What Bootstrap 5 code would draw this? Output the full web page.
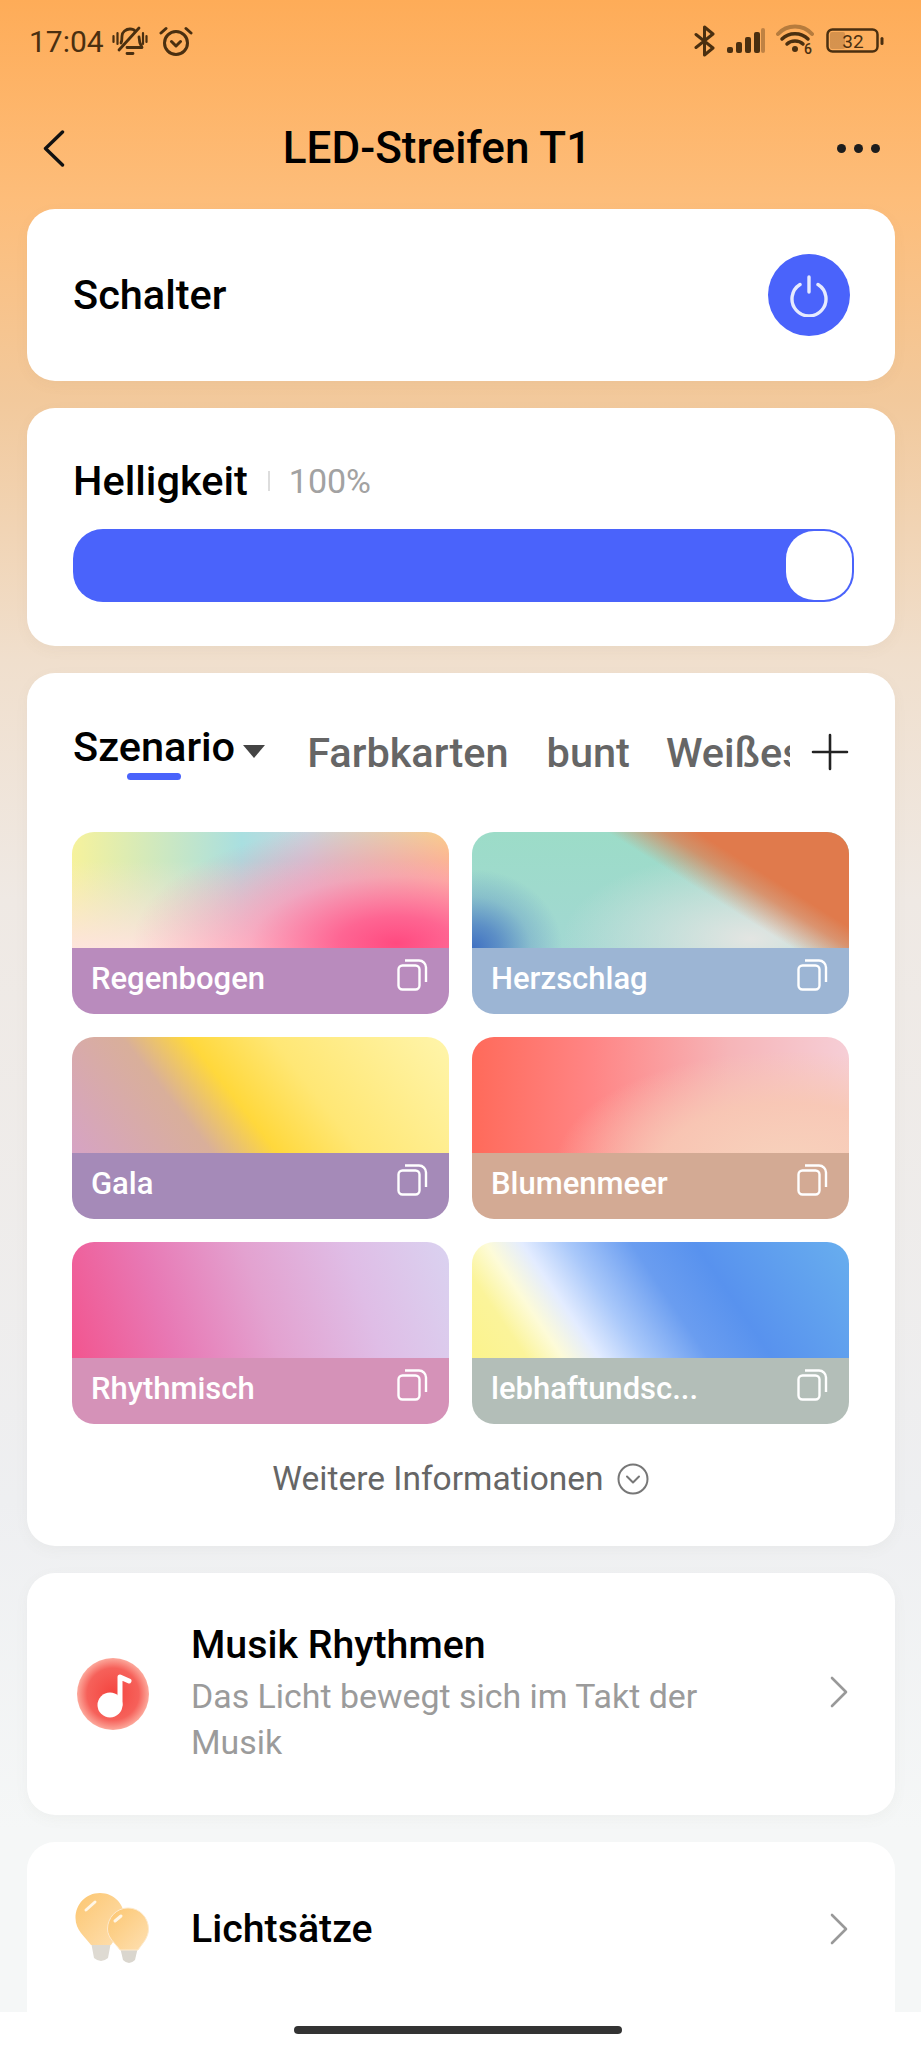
<!DOCTYPE html>
<html lang="de">
<head>
    <meta charset="UTF-8">
    <meta name="viewport" content="width=device-width, initial-scale=1.0">
    <title>LED-Streifen T1</title>
    <link href="https://cdn.jsdelivr.net/npm/bootstrap@5.3.2/dist/css/bootstrap.min.css" rel="stylesheet">
    <style>
        html, body { margin: 0; height: 2048px; overflow: hidden; }
        body { font-family: Roboto, "Liberation Sans", sans-serif; color: #000; background: #f5f7f7; }
        .app-screen {
            height: 2048px;
            background: linear-gradient(180deg, #feac58 0, #fdbd7a 200px, #f2c99c 400px, #f0dfcd 660px, #efe9e4 900px, #eeeff1 1500px, #f5f7f7 1830px);
        }
        .status-row { height: 82px; padding: 0 37px 0 29px; color: #4a2f10; font-size: 30px; }
        .status-row svg { display: block; }
        .status-gap { gap: 10px; }
        .alarm-gap { margin-left: 11px; }
        .nav-row { height: 127px; padding: 5px 41px 0 43px; }
        .nav-title { font-size: 44px; font-weight: 500; line-height: 1; position: absolute; left: 0; right: 47px; text-align: center; }
        .dots i { display: block; width: 9px; height: 9px; border-radius: 50%; background: #1d1d1d; }
        .panel { margin: 0 26px 27px 27px; border: 0; border-radius: 28px; box-shadow: 0 4px 14px rgba(120, 110, 100, .05); }
        .panel-switch { height: 172px; padding: 0 45px 0 46px; }
        .panel-switch span, .label-main { font-size: 41.500px; font-weight: 500; line-height: 48px; }
        .power-btn { width: 82px; height: 82px; border-radius: 50%; background: #4a63fb; }
        .panel-bright { height: 238px; padding: 49px 41px 0 46px; }
        .bright-sep { width: 2px; height: 20px; background: #ddd; margin: 0 19px 0 20px; }
        .bright-val { font-size: 34px; line-height: 48px; color: #a2a2a2; }
        .bright-track { height: 73px; margin-top: 24px; border-radius: 30px; background: #4a63fb; padding: 2px; }
        .bright-thumb { width: 66px; height: 69px; border-radius: 28px; background: #fff; }
        .panel-scene { height: 873px; padding: 50px 46px 0 45px; }
        .tab-strip { height: 109px; margin-left: 1px; }
        .tab-scroll { width: 717px; height: 60px; overflow: hidden; white-space: nowrap; }
        .tab-item { font-size: 41.500px; font-weight: 500; line-height: 48px; color: #666; margin-top: 6px; margin-right: 38px; }
        .tab-active { color: #000; margin-top: 0; margin-right: 42px; position: relative; }
        .tab-item-short { margin-right: 36px; }
        .tab-caret { display: inline-block; width: 0; height: 0; margin-left: 8px; border: 11px solid transparent; border-top: 13px solid #444; border-bottom: 0; vertical-align: 3px; }
        .tab-line { position: absolute; left: 54px; top: 50px; width: 54px; height: 7px; border-radius: 4px; background: #4a63fb; }
        .plus-mark { margin-top: 10px; }
        .tile-grid { display: grid; grid-template-columns: 377px 377px; gap: 23px; }
        .tile { height: 182px; border-radius: 22px; overflow: hidden; }
        .tile-art { height: 116px; }
        .tile-bar { height: 66px; padding: 0 20px 4px 19px; color: #fff; font-size: 31px; font-weight: 500; }
        .tile-bar svg { margin-bottom: 7px; }
        .art-rainbow { background:
            radial-gradient(ellipse 70% 105% at 86% 96%, #ff4a80 0, rgba(255, 88, 140, .9) 22%, rgba(255, 125, 170, .55) 55%, rgba(255, 140, 175, 0) 100%),
            linear-gradient(180deg, rgba(253, 226, 218, 0) 25%, #fde4dc 100%),
            linear-gradient(90deg, #f6f29c 0, #a9dfe0 45%, #c8d4dc 62%, #fad488 100%); }
        .art-heart { background:
            linear-gradient(32deg, rgba(224, 122, 76, 0) 57%, rgba(224, 122, 76, .75) 67%, #e07a4c 73%),
            radial-gradient(ellipse 24% 68% at 0 100%, #3f70c2 0, rgba(63, 112, 194, .7) 30%, rgba(63, 112, 194, .25) 65%, rgba(63, 112, 194, 0) 100%),
            radial-gradient(ellipse 50% 75% at 74% 92%, #e3e5e2 0, rgba(226, 229, 226, 0) 100%),
            linear-gradient(180deg, #9cdcc8, #a2d8d2); }
        .art-gala { background: linear-gradient(52deg, #d6a3c4 0, #d9af9a 30%, #ffd83c 44%, #ffe775 62%, #fff5ab 100%); }
        .art-flower { background:
            radial-gradient(ellipse 62% 100% at 84% 112%, #f7d2bc 0, rgba(248, 200, 180, .9) 55%, rgba(248, 195, 180, 0) 100%),
            linear-gradient(90deg, #ff6a5a 0, #ff8585 32%, #f6b5b8 68%, #f6ced6 100%); }
        .art-rhythm { background: linear-gradient(72deg, #f2558f 0, #e878b4 25%, #e3a2d0 50%, #dfbde6 75%, #dad2f0 100%); }
        .art-vivid { background: linear-gradient(56deg, #fbf38c 0, #fbf49a 12%, #fdfbd8 20%, #e3ecff 28%, #a9c8fa 38%, #6a9df0 52%, #5892ee 66%, #68aeee 100%); }
        .bar-rainbow { background: #b98bbd; }
        .bar-heart { background: #9cb5d4; }
        .bar-gala { background: #a58ab8; }
        .bar-flower { background: #d3aa94; }
        .bar-rhythm { background: #d592b8; }
        .bar-vivid { background: #b3beb8; }
        .more-row { height: 118px; color: #666; font-size: 33.500px; gap: 13px; padding-bottom: 8px; }
        .panel-music { height: 242px; padding: 0 47px 0 49px; }
        .row-text { margin-left: 41px; width: 560px; }
        .row-title { font-size: 39.300px; font-weight: 500; line-height: 46px; }
        .row-sub { font-size: 33.900px; line-height: 46px; color: #9b9b9b; margin-top: 6px; }
        .row-chev { margin-left: auto; }
        .panel-light { height: 170px; margin-bottom: 0; padding: 4px 47px 0 48px; border-radius: 28px 28px 0 0; box-shadow: none; }
        .home-bar { height: 36px; background: #fff; padding-top: 14px; }
        .home-bar i { display: block; width: 328px; height: 8px; border-radius: 4px; background: #333; margin-left: 294px; }
    </style>
</head>
<body>
<svg width="0" height="0" class="position-absolute">
    <symbol id="copyIcon" viewBox="0 0 32 33">
        <rect x="1.500" y="6.500" width="21" height="24" rx="4" fill="none" stroke="#fff" stroke-width="2.400"/>
        <path d="M8 1.500h14a7 7 0 0 1 7 7v14.500" fill="none" stroke="#fff" stroke-width="2.400"/>
    </symbol>
</svg>
<div class="app-screen d-flex flex-column">

    <div class="status-row d-flex align-items-center justify-content-between">
        <div class="d-flex align-items-center">
            <span>17:04</span>
            <svg class="ms-2" width="36" height="32" viewBox="0 0 36 32" fill="none" stroke="#4a2f10" stroke-width="2.800" stroke-linecap="round" stroke-linejoin="round">
                <path d="M9 18c1-2 1-4 1-7 0-4 4-7 8-7 2 0 4 .5 5 2M27 12c0 4 1 7 3 10.500H15M15 28.500h6"/>
                <path d="M7 25 27 3"/>
                <path d="M1.500 11v6M5.500 8v11M31 8v11M34.500 11v6" stroke-width="2.200"/>
            </svg>
            <svg class="alarm-gap" width="34" height="30" viewBox="0 0 34 30" fill="none" stroke="#4a2f10" stroke-width="3" stroke-linecap="round" stroke-linejoin="round">
                <circle cx="17" cy="17" r="11.500"/>
                <path d="M12.500 15.500 17 20l4.500-4.500M2 7l5-4.500M32 7l-5-4.500"/>
            </svg>
        </div>
        <div class="d-flex align-items-center status-gap">
            <svg width="22" height="32" viewBox="0 0 22 32" fill="none" stroke="#4a2f10" stroke-width="3" stroke-linejoin="round" stroke-linecap="round">
                <path d="M2 9.500 19 23l-8.500 7V2L19 9 2 22.500"/>
            </svg>
            <svg width="40" height="26" viewBox="0 0 40 26">
                <rect x="1" y="19" width="6" height="6" rx="2" fill="#4a2f10"/>
                <rect x="10" y="14" width="6" height="11" rx="2" fill="#4a2f10"/>
                <rect x="19" y="9" width="6" height="16" rx="2" fill="#4a2f10"/>
                <rect x="28" y="4" width="6" height="21" rx="2" fill="#4a2f10"/>
                <rect x="35" y="0" width="4" height="25" rx="2" fill="#4a2f10" opacity=".35"/>
            </svg>
            <svg width="40" height="34" viewBox="0 0 40 34" fill="none" stroke="#4a2f10" stroke-linecap="round">
                <path d="M2 10C11 0 27 0 36 10" stroke-width="4" opacity=".4"/>
                <path d="M6 15c7-7 19-7 26 0M11 20c4-4 12-4 16 0" stroke-width="3.500"/>
                <circle cx="19" cy="25" r="3" fill="#4a2f10" stroke="none"/>
                <text x="28" y="30" font-size="14" font-weight="500" font-family="Roboto, sans-serif" fill="#4a2f10" stroke="none">6</text>
            </svg>
            <svg width="58" height="26" viewBox="0 0 58 26">
                <rect x="1.500" y="1.500" width="50" height="22" rx="5" fill="none" stroke="#4a2f10" stroke-width="2.500"/>
                <rect x="4" y="4" width="15" height="17" rx="2" fill="#4a2f10" opacity=".22"/>
                <text x="27" y="20" text-anchor="middle" font-size="19" font-family="Roboto, sans-serif" fill="#4a2f10">32</text>
                <rect x="54.500" y="9" width="3" height="8" rx="1.500" fill="#4a2f10"/>
            </svg>
        </div>
    </div>

    <div class="nav-row d-flex align-items-center justify-content-between position-relative">
        <svg width="22" height="37" viewBox="0 0 22 37" fill="none" stroke="#111" stroke-width="3.400" stroke-linecap="round" stroke-linejoin="round"><path d="M19.500 2 2.500 18.500l17 16.500"/></svg>
        <div class="nav-title">LED-Streifen T1</div>
        <div class="dots d-flex gap-2"><i></i><i></i><i></i></div>
    </div>

    <div class="card panel panel-switch flex-row align-items-center justify-content-between">
        <span>Schalter</span>
        <div class="power-btn d-flex align-items-center justify-content-center">
            <svg width="44" height="44" viewBox="0 0 44 44" fill="none" stroke="#e6eafe" stroke-width="3.400" stroke-linecap="round"><path d="M13 11.500a17 17 0 1 0 18 0M22 4v15"/></svg>
        </div>
    </div>

    <div class="card panel panel-bright">
        <div class="d-flex align-items-center">
            <span class="label-main">Helligkeit</span>
            <span class="bright-sep"></span>
            <span class="bright-val">100%</span>
        </div>
        <div class="bright-track d-flex justify-content-end">
            <div class="bright-thumb"></div>
        </div>
    </div>

    <div class="card panel panel-scene">
        <div class="tab-strip d-flex align-items-start justify-content-between">
            <div class="tab-scroll d-flex align-items-start">
                <div class="tab-item tab-active">Szenario<span class="tab-caret"></span><span class="tab-line"></span></div>
                <div class="tab-item">Farbkarten</div>
                <div class="tab-item tab-item-short">bunt</div>
                <div class="tab-item">Weißes</div>
            </div>
            <svg class="plus-mark" width="38" height="38" viewBox="0 0 38 38" stroke="#222" stroke-width="2.600" stroke-linecap="round"><path d="M19 2v34M2 19h34"/></svg>
        </div>

        <div class="tile-grid">
            <div class="tile"><div class="tile-art art-rainbow"></div><div class="tile-bar bar-rainbow d-flex align-items-center justify-content-between"><span>Regenbogen</span><svg width="32" height="33"><use href="#copyIcon"/></svg></div></div>
            <div class="tile"><div class="tile-art art-heart"></div><div class="tile-bar bar-heart d-flex align-items-center justify-content-between"><span>Herzschlag</span><svg width="32" height="33"><use href="#copyIcon"/></svg></div></div>
            <div class="tile"><div class="tile-art art-gala"></div><div class="tile-bar bar-gala d-flex align-items-center justify-content-between"><span>Gala</span><svg width="32" height="33"><use href="#copyIcon"/></svg></div></div>
            <div class="tile"><div class="tile-art art-flower"></div><div class="tile-bar bar-flower d-flex align-items-center justify-content-between"><span>Blumenmeer</span><svg width="32" height="33"><use href="#copyIcon"/></svg></div></div>
            <div class="tile"><div class="tile-art art-rhythm"></div><div class="tile-bar bar-rhythm d-flex align-items-center justify-content-between"><span>Rhythmisch</span><svg width="32" height="33"><use href="#copyIcon"/></svg></div></div>
            <div class="tile"><div class="tile-art art-vivid"></div><div class="tile-bar bar-vivid d-flex align-items-center justify-content-between"><span>lebhaftundsc...</span><svg width="32" height="33"><use href="#copyIcon"/></svg></div></div>
        </div>

        <div class="more-row d-flex align-items-center justify-content-center">
            <span>Weitere Informationen</span>
            <svg width="32" height="32" viewBox="0 0 32 32" fill="none" stroke="#777" stroke-width="2"><circle cx="16" cy="16" r="14.500"/><path d="M10 13.500l6 6 6-6" stroke-linecap="round" stroke-linejoin="round"/></svg>
        </div>
    </div>

    <div class="card panel panel-music flex-row align-items-center">
        <svg width="74" height="74" viewBox="0 0 74 74">
            <defs><radialGradient id="musicFill"><stop offset="0" stop-color="#f4443f"/><stop offset=".72" stop-color="#f6615a"/><stop offset="1" stop-color="#fca99c"/></radialGradient></defs>
            <circle cx="37" cy="37" r="36" fill="url(#musicFill)"/>
            <circle cx="34" cy="48" r="12.500" fill="#fff"/>
            <path d="M44 48V20l9 4" fill="none" stroke="#fff" stroke-width="5" stroke-linecap="round" stroke-linejoin="round"/>
        </svg>
        <div class="row-text">
            <div class="row-title">Musik Rhythmen</div>
            <div class="row-sub">Das Licht bewegt sich im Takt der Musik</div>
        </div>
        <svg class="row-chev mb-1" width="18" height="32" viewBox="0 0 18 32" fill="none" stroke="#999" stroke-width="2.600" stroke-linecap="round" stroke-linejoin="round"><path d="M2 2l14 14L2 30"/></svg>
    </div>

    <div class="card panel panel-light flex-row align-items-center">
        <svg width="75" height="74" viewBox="0 0 75 74">
            <defs><linearGradient id="bulbFill" x1="0" y1="0" x2="1" y2="1"><stop offset="0" stop-color="#fcc670"/><stop offset="1" stop-color="#fee0b2"/></linearGradient></defs>
            <path d="M16 50h20l-3 16q-7 6-14 0z" fill="#dedad2"/>
            <path d="M25 1C39 1 49.500 12 49.500 26 49.500 38 41 45 36 53H16C10 45 .5 38 .5 26 .5 12 11 1 25 1z" fill="url(#bulbFill)"/>
            <path d="M45 55h18l-3 13q-6 6-12 0z" fill="#dad6ce"/>
            <path d="M53 16C65 16 73.500 26 73.500 37 73.500 46 67 52 63 58H45C41 52 32.500 46 32.500 37 32.500 26 41 16 53 16z" fill="url(#bulbFill)" stroke="#fdeacd" stroke-width="1"/>
            <path d="M11 18l9-8M40 29l6-5" stroke="#fff6e6" stroke-width="3" stroke-linecap="round"/>
        </svg>
        <div class="row-text"><div class="row-title">Lichtsätze</div></div>
        <svg class="row-chev" width="18" height="32" viewBox="0 0 18 32" fill="none" stroke="#999" stroke-width="2.600" stroke-linecap="round" stroke-linejoin="round"><path d="M2 2l14 14L2 30"/></svg>
    </div>

    <div class="home-bar"><i></i></div>
</div>
<script src="https://cdn.jsdelivr.net/npm/bootstrap@5.3.2/dist/js/bootstrap.bundle.min.js"></script>
</body>
</html>
